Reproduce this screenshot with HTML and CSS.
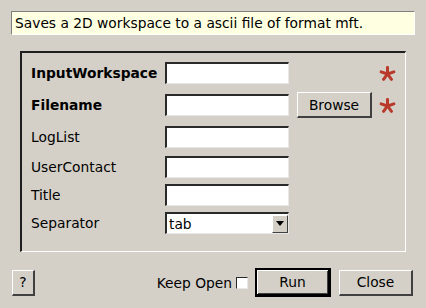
FILE: index.html
```html
<!DOCTYPE html>
<html lang="en">
<head>
  <meta charset="UTF-8" />
  <title>SaveMFT</title>
  <link rel="stylesheet" href="styles.css">
</head>
<body>
  <div class="dialog">
    <div class="summary">Saves a 2D workspace to a ascii file of format mft.</div>

    <div class="group">
      <div class="props">
        <label class="bold">InputWorkspace</label>
        <div class="field"></div>
        <span></span>
        <svg class="star" viewBox="0 0 18 16"><g stroke="#b93a2a" stroke-width="3.2" stroke-linecap="round"><line x1="9" y1="8.5" x2="9" y2="1.5"/><line x1="9" y1="8.5" x2="2.2" y2="6.3"/><line x1="9" y1="8.5" x2="15.8" y2="6.3"/><line x1="9" y1="8.5" x2="4.8" y2="14.2"/><line x1="9" y1="8.5" x2="13.2" y2="14.2"/></g></svg>

        <label class="bold">Filename</label>
        <div class="field"></div>
        <button class="btn browse">Browse</button>
        <svg class="star" viewBox="0 0 18 16"><g stroke="#b93a2a" stroke-width="3.2" stroke-linecap="round"><line x1="9" y1="8.5" x2="9" y2="1.5"/><line x1="9" y1="8.5" x2="2.2" y2="6.3"/><line x1="9" y1="8.5" x2="15.8" y2="6.3"/><line x1="9" y1="8.5" x2="4.8" y2="14.2"/><line x1="9" y1="8.5" x2="13.2" y2="14.2"/></g></svg>

        <label>LogList</label>
        <div class="field"></div>
        <span></span><span></span>

        <label>UserContact</label>
        <div class="field"></div>
        <span></span><span></span>

        <label>Title</label>
        <div class="field"></div>
        <span></span><span></span>

        <label>Separator</label>
        <div class="field combo">
          <span class="combo-text">tab</span>
          <span class="combo-arrow"><svg viewBox="0 0 8 5" width="8" height="5"><path d="M0 0h8L4 5z" fill="#000"/></svg></span>
        </div>
        <span></span><span></span>
      </div>
    </div>

    <div class="footer">
      <button class="btn help">?</button>
      <span class="keep">Keep Open</span>
      <span class="check"></span>
      <button class="btn run">Run</button>
      <button class="btn close">Close</button>
    </div>
  </div>
</body>
</html>
```

FILE: styles.css
```css
body { margin: 0; background: #d4d0c8; font-family: "DejaVu Sans", sans-serif; font-size: 13.8px; color: #000; }
.dialog { width: 426px; height: 308px; box-sizing: border-box; padding-top: 11px; }

.summary {
  margin: 0 11px; height: 24px; box-sizing: border-box; padding: 0 3px;
  background: #ffffe1; border: 1px solid; border-color: #808080 #fff #fff #808080;
  line-height: 22px; white-space: nowrap;
}

.group {
  margin: 16px 20px 0 20px; height: 201px; box-sizing: border-box;
  border-style: solid; border-width: 2px 1px 1px 2px; border-color: #1e1e1e #fff #fff #1e1e1e;
  padding: 7px 0 0 9px;
}
.props {
  display: grid; grid-template-columns: 134px 124px 83px 24px;
  grid-template-rows: 26px 26px 26px 22px 22px 22px; row-gap: 6px;
  align-items: center;
}
.props label { white-space: nowrap; }
.bold { font-weight: bold; }
.field {
  height: 22px; box-sizing: border-box; background: #fff;
  border-style: solid; border-width: 2px 1px 1px 2px; border-color: #2a2a2a #e8e8e8 #e8e8e8 #2a2a2a;
}
.star { width: 17px; height: 15px; justify-self: end; }

.btn {
  font-family: inherit; font-size: 13.8px; color: #000; background: #d4d0c8; padding: 0;
  border-style: solid; border-width: 1px 2px 2px 1px; border-color: #fff #404040 #404040 #fff;
  height: 26px; box-sizing: border-box;
}
.browse { width: 75px; margin-left: 8px; }

.combo { display: flex; align-items: center; justify-content: space-between; padding-left: 2px; }
.combo-text { line-height: 18px; }
.combo-arrow {
  width: 16px; height: 18px; box-sizing: border-box; display: flex; align-items: center; justify-content: center;
  background: #d4d0c8; border-style: solid; border-width: 1px 1px 1px 1px; border-color: #fff #404040 #404040 #fff;
}

.footer { display: flex; align-items: center; margin-top: 16px; padding: 0 13px 0 12px; height: 29px; }
.help { width: 23px; }
.keep { margin-left: auto; }
.check {
  width: 12px; height: 12px; box-sizing: border-box; margin: 0 7px 0 4px; background: #fff;
  border-style: solid; border-width: 1px; border-color: #2a2a2a #e8e8e8 #e8e8e8 #2a2a2a;
}
.run { width: 76px; height: 29px; border-width: 2px 3px 3px 2px; border-color: #000; box-shadow: inset 1px 1px #fff, inset -1px -1px #404040; }
.close { width: 74px; margin-left: 8px; }
```
